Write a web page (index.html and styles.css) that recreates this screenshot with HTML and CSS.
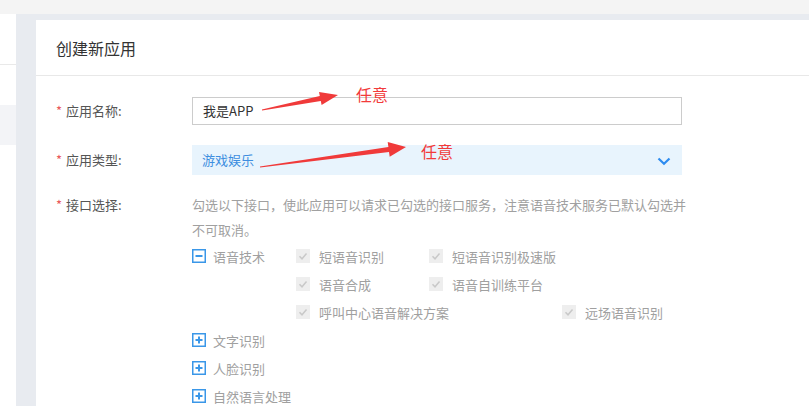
FILE: index.html
```html
<!DOCTYPE html>
<html lang="zh-CN">
<head>
<meta charset="utf-8">
<title>创建新应用</title>
<link rel="stylesheet" href="styles.css">
</head>
<body>
<div class="topbar"></div>
<div class="layout">
  <aside class="sidebar">
    <div class="side-line"></div>
    <div class="side-active"></div>
  </aside>
  <div class="gutter">
    <main class="panel">
      <div class="panel-head"><h2 class="title">创建新应用</h2></div>
      <div class="form">
        <div class="row row-name">
          <div class="lbl"><span class="req">*</span>应用名称:</div>
          <div class="input">我是APP</div>
        </div>
        <div class="row row-type">
          <div class="lbl"><span class="req">*</span>应用类型:</div>
          <div class="select">游戏娱乐
            <svg class="chev" width="14" height="9" viewBox="0 0 14 9"><path d="M1.5 1.5 L7 6.8 L12.5 1.5" fill="none" stroke="#2d8cf0" stroke-width="2.2"/></svg>
          </div>
        </div>
        <div class="row row-api">
          <div class="lbl"><span class="req">*</span>接口选择:</div>
          <div class="api">
            <p class="desc">勾选以下接口，使此应用可以请求已勾选的接口服务，注意语音技术服务已默认勾选并不可取消。</p>
            <div class="grp">
              <div class="grp-head">
                <svg class="tog" width="14" height="14" viewBox="0 0 14 14"><rect x="0.75" y="0.75" width="12.5" height="12.5" fill="#fff" stroke="#3a97e8" stroke-width="1.5"/><path d="M3.5 7 H10.5" stroke="#3a97e8" stroke-width="2"/></svg>
                <span>语音技术</span>
              </div>
              <div class="opts">
                <div class="opt-row">
                  <div class="opt"><svg class="cb" width="14" height="14" viewBox="0 0 14 14"><rect width="14" height="14" fill="#eeeeee"/><path d="M3.5 7.3 L6 9.8 L10.5 4.5" fill="none" stroke="#c9c9c9" stroke-width="1.5"/></svg><span>短语音识别</span></div>
                  <div class="opt"><svg class="cb" width="14" height="14" viewBox="0 0 14 14"><rect width="14" height="14" fill="#eeeeee"/><path d="M3.5 7.3 L6 9.8 L10.5 4.5" fill="none" stroke="#c9c9c9" stroke-width="1.5"/></svg><span>短语音识别极速版</span></div>
                </div>
                <div class="opt-row">
                  <div class="opt"><svg class="cb" width="14" height="14" viewBox="0 0 14 14"><rect width="14" height="14" fill="#eeeeee"/><path d="M3.5 7.3 L6 9.8 L10.5 4.5" fill="none" stroke="#c9c9c9" stroke-width="1.5"/></svg><span>语音合成</span></div>
                  <div class="opt"><svg class="cb" width="14" height="14" viewBox="0 0 14 14"><rect width="14" height="14" fill="#eeeeee"/><path d="M3.5 7.3 L6 9.8 L10.5 4.5" fill="none" stroke="#c9c9c9" stroke-width="1.5"/></svg><span>语音自训练平台</span></div>
                </div>
                <div class="opt-row">
                  <div class="opt opt-wide"><svg class="cb" width="14" height="14" viewBox="0 0 14 14"><rect width="14" height="14" fill="#eeeeee"/><path d="M3.5 7.3 L6 9.8 L10.5 4.5" fill="none" stroke="#c9c9c9" stroke-width="1.5"/></svg><span>呼叫中心语音解决方案</span></div>
                  <div class="opt"><svg class="cb" width="14" height="14" viewBox="0 0 14 14"><rect width="14" height="14" fill="#eeeeee"/><path d="M3.5 7.3 L6 9.8 L10.5 4.5" fill="none" stroke="#c9c9c9" stroke-width="1.5"/></svg><span>远场语音识别</span></div>
                </div>
              </div>
            </div>
            <div class="grp">
              <div class="grp-head">
                <svg class="tog" width="14" height="14" viewBox="0 0 14 14"><rect x="0.75" y="0.75" width="12.5" height="12.5" fill="#fff" stroke="#3a97e8" stroke-width="1.5"/><path d="M3.5 7 H10.5 M7 3.5 V10.5" stroke="#3a97e8" stroke-width="2"/></svg>
                <span>文字识别</span>
              </div>
            </div>
            <div class="grp">
              <div class="grp-head">
                <svg class="tog" width="14" height="14" viewBox="0 0 14 14"><rect x="0.75" y="0.75" width="12.5" height="12.5" fill="#fff" stroke="#3a97e8" stroke-width="1.5"/><path d="M3.5 7 H10.5 M7 3.5 V10.5" stroke="#3a97e8" stroke-width="2"/></svg>
                <span>人脸识别</span>
              </div>
            </div>
            <div class="grp">
              <div class="grp-head grp-head-wide">
                <svg class="tog" width="14" height="14" viewBox="0 0 14 14"><rect x="0.75" y="0.75" width="12.5" height="12.5" fill="#fff" stroke="#3a97e8" stroke-width="1.5"/><path d="M3.5 7 H10.5 M7 3.5 V10.5" stroke="#3a97e8" stroke-width="2"/></svg>
                <span>自然语言处理</span>
              </div>
            </div>
          </div>
        </div>
      </div>
    </main>
  </div>
</div>
<svg class="annot" width="809" height="406" viewBox="0 0 809 406">
  <polygon fill="#f03a3a" points="261.9,109.5 319.8,96.05 319,92.1 338,95 321.6,104.9 320.8,100.95 262.1,110.5"/>
  <polygon fill="#f03a3a" points="259.9,166.5 388.4,146.9 387.7,142 406,147 389.7,156.8 389,151.9 260.1,167.5"/>
</svg>
<span class="note note-a">任意</span>
<span class="note note-b">任意</span>
</body>
</html>
```
FILE: styles.css
```css
* { box-sizing: border-box; }
html, body { margin: 0; padding: 0; }
body {
  width: 809px;
  height: 406px;
  overflow: hidden;
  background: #fff;
  font-family: "Noto Sans CJK SC", "Liberation Sans", sans-serif;
  font-size: 13px;
  color: #333;
  position: relative;
}
.topbar { height: 14px; background: #f4f4f4; }
.layout { display: flex; height: 392px; }
.sidebar { width: 16px; flex: none; background: #fff; padding-top: 50px; }
.side-line { height: 1px; background: #e9e9e9; }
.side-active { margin-top: 40px; height: 40px; background: #f3f4f7; }
.gutter { flex: 1; background: #e8ebf0; padding: 6px 0 0 20px; display: flex; }
.panel { flex: 1; background: #fff; }
.panel-head { height: 56px; border-bottom: 1px solid #e8e8e8; display: flex; align-items: center; padding-left: 20px; }
.title { margin: 0; font-size: 16px; font-weight: normal; color: #333; line-height: 20px; padding-top: 1px; }
.form { padding: 21px 0 0 20px; }
.row { display: flex; }
.lbl { width: 136px; flex: none; color: #555; font-size: 13px; }
.req { color: #e9595b; margin-right: 4px; }
.row-name .lbl { line-height: 28px; }
.input { width: 490px; height: 28px; border: 1px solid #cccccc; padding: 0 10px; line-height: 26px; color: #333; }
.row-type { margin-top: 20px; }
.row-type .lbl { line-height: 30px; }
.select { position: relative; width: 490px; height: 30px; background: #e8f4fd; padding: 0 10px; line-height: 30px; color: #3d8ee0; }
.chev { position: absolute; right: 11px; top: 12px; }
.row-api { margin-top: 17px; }
.row-api .lbl { line-height: 25px; }
.api { width: 500px; }
.desc { margin: 0; line-height: 25px; color: #a0a0a0; }
.grp { display: flex; color: #a0a0a0; }
.grp-head { width: 104px; flex: none; height: 28px; display: flex; align-items: center; gap: 7px; white-space: nowrap; }
.tog { flex: none; }
.opts { display: flex; flex-direction: column; }
.opt-row { display: flex; height: 28px; }
.opt { width: 133px; display: flex; align-items: center; gap: 9px; white-space: nowrap; }
.opt-wide { width: 266px; }
.cb { flex: none; }
.annot { position: absolute; left: 0; top: 0; pointer-events: none; }
.note { position: absolute; font-size: 16px; line-height: 16px; color: #f23b3b; }
.note-a { left: 356px; top: 86px; }
.note-b { left: 421px; top: 143px; }
```
